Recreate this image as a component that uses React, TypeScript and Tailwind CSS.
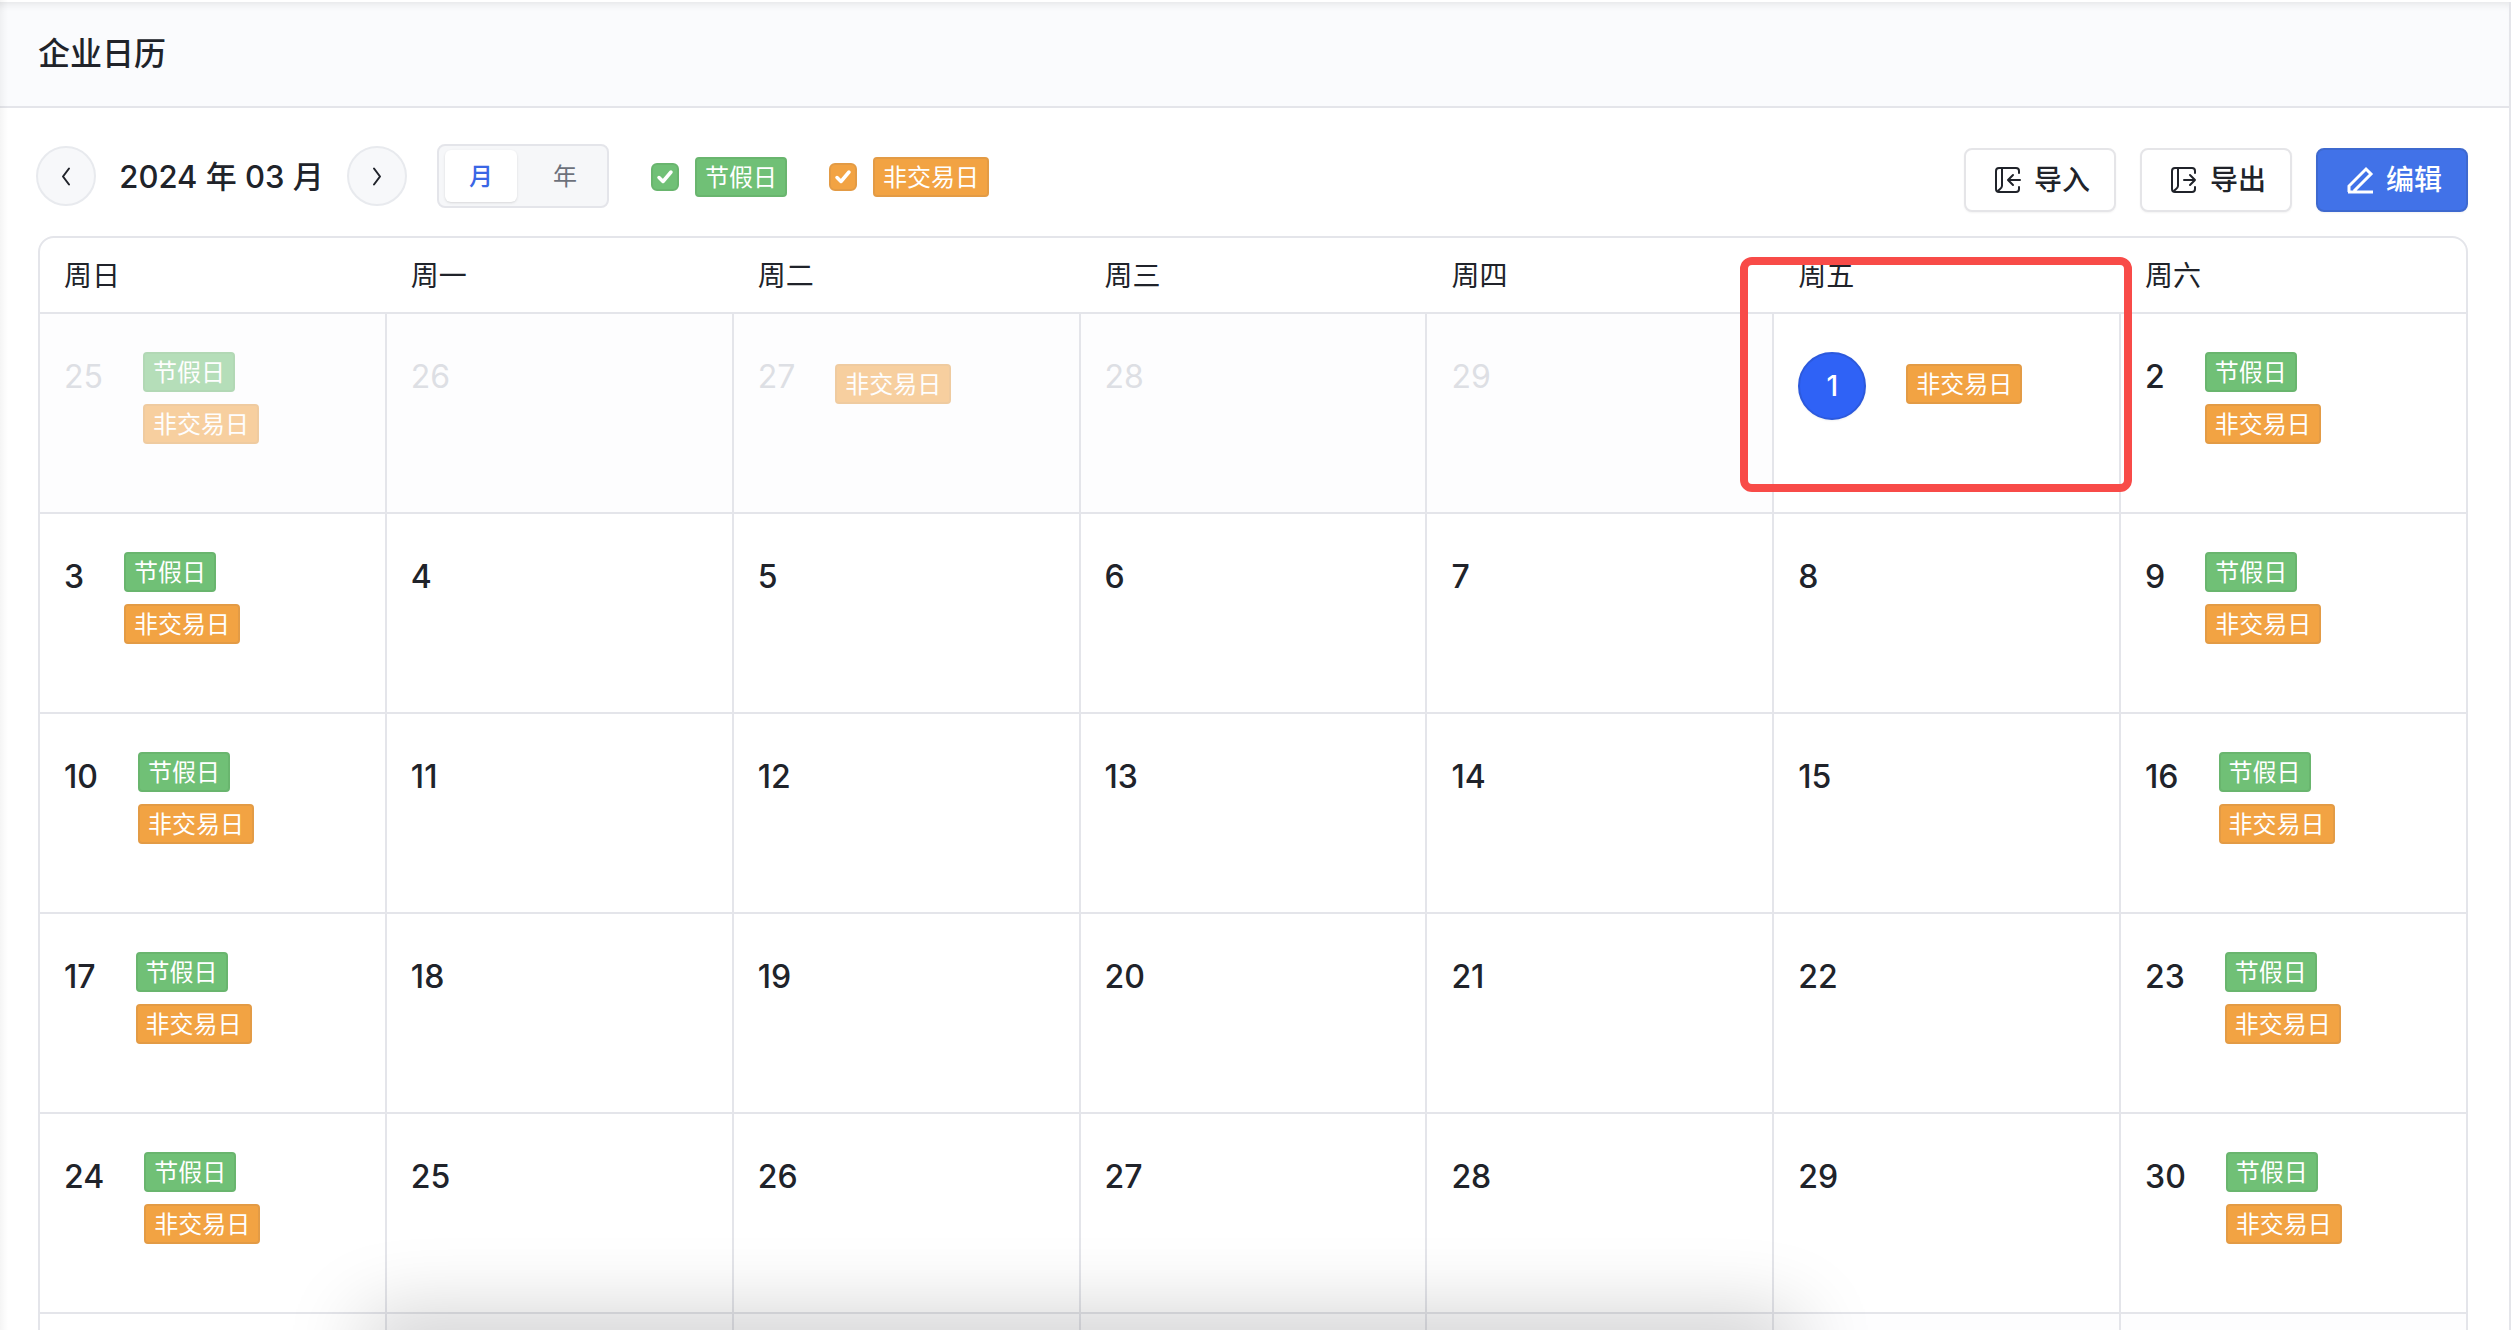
import { useState } from "react";

interface Day {
  day: number;
  muted?: boolean;
  today?: boolean;
  holiday?: boolean;
  closed?: boolean;
}

const weekdays = ["周日", "周一", "周二", "周三", "周四", "周五", "周六"];

// February 25th is the first cell of the March 2024 grid
const cells: Day[] = Array.from({ length: 42 }, (_, i) => {
  const weekend = i % 7 === 0 || i % 7 === 6;
  const day = i < 5 ? 25 + i : i < 36 ? i - 4 : i - 35;
  return {
    day,
    muted: i < 5 || i > 35,
    today: i === 5,
    holiday: weekend,
    closed: weekend || i === 2 || i === 5,
  };
});

const weeks = Array.from({ length: 6 }, (_, w) => cells.slice(w * 7, w * 7 + 7));

function Tag({ kind }: { kind: "holiday" | "closed" }) {
  return (
    <span
      className={`flex h-10 items-center rounded border-2 px-2 pt-0.5 text-2xl leading-9 whitespace-nowrap text-white ${
        kind === "holiday" ? "border-[#69b56e] bg-[#70c076]" : "border-[#e39b45] bg-[#f2a343]"
      }`}
    >
      {kind === "holiday" ? "节假日" : "非交易日"}
    </span>
  );
}

function CheckTag({
  kind,
  checked,
  onChange,
}: {
  kind: "holiday" | "closed";
  checked: boolean;
  onChange: () => void;
}) {
  return (
    <label className="flex items-center gap-4">
      <span className="relative flex size-7">
        <input
          type="checkbox"
          checked={checked}
          onChange={onChange}
          className={`size-7 appearance-none rounded-md border-2 ${
            kind === "holiday"
              ? "border-[#69b56e] checked:bg-[#70c076]"
              : "border-[#e39b45] checked:bg-[#f2a343]"
          }`}
        />
        {checked && (
          <svg
            className="pointer-events-none absolute inset-0 size-7"
            viewBox="0 0 28 28"
            fill="none"
            stroke="#fff"
            strokeWidth="3.5"
            strokeLinecap="round"
            strokeLinejoin="round"
          >
            <path d="M8 14.500l4 4L20 9" />
          </svg>
        )}
      </span>
      <Tag kind={kind} />
    </label>
  );
}

function Chevron({ d }: { d: string }) {
  return (
    <svg
      className="size-6"
      viewBox="0 0 24 24"
      fill="none"
      stroke="currentColor"
      strokeWidth="2"
      strokeLinecap="round"
      strokeLinejoin="round"
    >
      <path d={d} />
    </svg>
  );
}

function BookIcon({ arrow }: { arrow: string }) {
  return (
    <svg
      className="size-7"
      viewBox="0 0 28 28"
      fill="none"
      stroke="currentColor"
      strokeWidth="2"
      strokeLinecap="round"
      strokeLinejoin="round"
    >
      <path d="M25 7V5a3 3 0 0 0-3-3H5a3 3 0 0 0-3 3v18a3 3 0 0 0 3 3h17a3 3 0 0 0 3-3v-2" />
      <path d="M8 2v18c0 2-2 3-4 5" />
      <path d={arrow} />
    </svg>
  );
}

function DateCell({ cell }: { cell: Day }) {
  return (
    <td
      className={`relative h-50 border-b-2 border-l-2 border-[#e4e5ea] px-6 pt-[38px] align-top ${
        cell.muted ? "bg-[#fdfdfe]" : ""
      }`}
    >
      <div className="flex items-start gap-10">
        {cell.today ? (
          <span className="flex size-[68px] items-center justify-center rounded-full border-2 border-[#2c59dc] bg-[#2f62f6] text-[28px] font-medium text-white shadow-xs">
            {cell.day}
          </span>
        ) : (
          <span
            className={`text-[32px] leading-[50px] ${
              cell.muted ? "text-[#dddfe4]" : "font-medium text-[#20232a]"
            }`}
          >
            {cell.day}
          </span>
        )}
        <div
          className={`flex flex-col items-start gap-3 ${cell.holiday ? "" : "pt-3"} ${
            cell.muted ? "opacity-50" : ""
          }`}
        >
          {cell.holiday && <Tag kind="holiday" />}
          {cell.closed && <Tag kind="closed" />}
        </div>
      </div>
      {cell.today && (
        <div className="pointer-events-none absolute -top-[57px] -right-[13px] bottom-5 -left-[34px] z-10 rounded-xl border-8 border-[#f84b48]" />
      )}
    </td>
  );
}

export default function App() {
  const [view, setView] = useState("月");
  const [showHoliday, setShowHoliday] = useState(true);
  const [showClosed, setShowClosed] = useState(true);

  const roundButton =
    "flex size-15 items-center justify-center rounded-full border-2 border-[#e8eaee] bg-[#f7f8fa]";
  const action =
    "flex h-16 w-38 items-center justify-center gap-3 rounded-lg border-2 pl-1 text-[28px] font-medium shadow-xs";

  return (
    <div className="relative h-screen overflow-hidden bg-white font-['Inter','Noto_Sans_CJK_SC',sans-serif] text-[#20232a]">
      <div className="h-full overflow-y-auto pt-0.5 pr-px [scrollbar-width:none]">
        <div className="min-h-full border-r-2 border-[#e4e5ea]">
          <header className="border-b-2 border-[#e4e5ea] bg-[#fafbfd] px-[38px] py-8 shadow-[inset_0_8px_8px_-6px_#00000018]">
            <h1 className="text-[32px] leading-10 font-medium">企业日历</h1>
          </header>

          <main className="pr-[41px] pl-9">
            <div className="flex items-start justify-between pt-9">
              <div className="flex items-center">
                <button aria-label="上个月" className={roundButton}>
                  <Chevron d="M15 4.500l-6 8 6 8" />
                </button>
                <h2 className="w-[251px] pt-0.5 text-center text-[31px] leading-12 font-medium whitespace-nowrap">
                  2024 年 03 月
                </h2>
                <button aria-label="下个月" className={roundButton}>
                  <Chevron d="M9 4.500l6 8-6 8" />
                </button>
                <div className="ml-[30px] flex h-16 items-center rounded-lg border-2 border-[#e4e5ea] bg-[#f6f7f9] px-1.5">
                  {["月", "年"].map((name) => (
                    <button
                      key={name}
                      onClick={() => setView(name)}
                      className={`h-13 rounded-md pt-0.5 text-2xl ${
                        view === name
                          ? "w-18 bg-white font-medium text-[#3a66e5] shadow"
                          : "w-21 pl-3 text-[#6d717b]"
                      }`}
                    >
                      {name}
                    </button>
                  ))}
                </div>
                <div className="ml-[42px] flex gap-[42px] pt-0.5">
                  <CheckTag
                    kind="holiday"
                    checked={showHoliday}
                    onChange={() => setShowHoliday(!showHoliday)}
                  />
                  <CheckTag
                    kind="closed"
                    checked={showClosed}
                    onChange={() => setShowClosed(!showClosed)}
                  />
                </div>
              </div>
              <div className="flex gap-6 pt-1">
                <button className={`${action} border-[#e5e5e8] bg-white`}>
                  <BookIcon arrow="M26 14H15M19 9l-5 5 5 5" />
                  导入
                </button>
                <button className={`${action} border-[#e5e5e8] bg-white`}>
                  <BookIcon arrow="M14 14h11M20 9l5 5-5 5" />
                  导出
                </button>
                <button className={`${action} border-[#3e69cf] bg-[#4172e8] text-white`}>
                  <svg
                    className="size-7"
                    viewBox="0 0 28 28"
                    fill="none"
                    stroke="currentColor"
                    strokeWidth="3"
                  >
                    <path d="M3 26v-6L20 3l5 5L8 25M2 26h25" />
                  </svg>
                  编辑
                </button>
              </div>
            </div>

            <div className="mt-6 ml-0.5 overflow-hidden rounded-2xl border-2 border-[#e4e5ea]">
              <table className="-ml-0.5 w-[calc(100%+2px)] table-fixed border-separate border-spacing-0">
                <thead>
                  <tr>
                    {weekdays.map((name) => (
                      <th
                        key={name}
                        className="h-19 border-b-2 border-[#e4e5ea] pt-0.5 pl-[26px] text-left text-[28px] leading-10 font-normal"
                      >
                        {name}
                      </th>
                    ))}
                  </tr>
                </thead>
                <tbody>
                  {weeks.map((week, i) => (
                    <tr key={i}>
                      {week.map((cell, j) => (
                        <DateCell key={j} cell={cell} />
                      ))}
                    </tr>
                  ))}
                </tbody>
              </table>
            </div>
          </main>
        </div>
      </div>
      <div className="pointer-events-none absolute inset-y-0 left-0 w-2 bg-linear-to-r from-black/4 to-transparent" />
      <div className="pointer-events-none absolute top-full right-[29%] left-[15%] h-10 shadow-[0_0_80px_12px_#00000038]" />
    </div>
  );
}
